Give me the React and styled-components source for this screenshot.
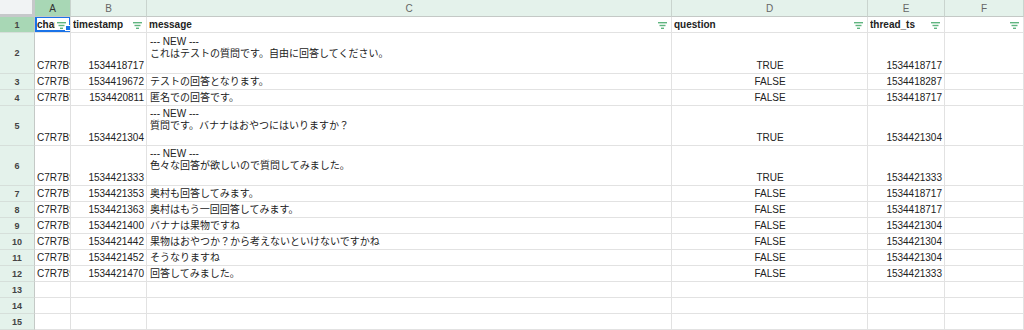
import React from "react";
import styled, { createGlobalStyle } from "styled-components";

const Global = createGlobalStyle`
  html, body { margin: 0; padding: 0; background: #fff; overflow: hidden; }
  body { font-family: "Liberation Sans", Arial, "Noto Sans CJK JP", sans-serif; }
`;

const Sheet = styled.div`
  display: grid;
  grid-template-columns: 35px 36px 76px 525px 196px 77px 79px;
  grid-template-rows: 17px 16px 41px 16px 16px 40px 40px repeat(9, 16px);
  width: 1024px;
  height: 330px;
  overflow: hidden;
  font-size: 10px;
  color: #222;
`;

const Corner = styled.div`
  background: #f1f3f4;
  border-right: 3px solid #c6c8ca;
  border-bottom: 3px solid #c6c8ca;
  box-sizing: border-box;
`;

const ColHead = styled.div`
  box-sizing: border-box;
  background: ${(p) => (p.$selected ? "#a8d7b5" : "#e4f2eb")};
  border-right: 1px solid #c9d4ce;
  border-bottom: 1px solid #c4c9c6;
  display: flex;
  align-items: center;
  justify-content: center;
  font-size: 10px;
  color: ${(p) => (p.$selected ? "#333" : "#666")};
  padding-top: 1px;
`;

const RowHead = styled.div`
  box-sizing: border-box;
  background: ${(p) => (p.$selected ? "#a8d7b5" : "#e4f2eb")};
  border-right: 1px solid #c4c9c6;
  border-bottom: 1px solid #d6dfda;
  display: flex;
  align-items: center;
  justify-content: center;
  font-size: 9px;
  font-weight: bold;
  color: #444;
`;

const Cell = styled.div`
  position: relative;
  box-sizing: border-box;
  border-right: 1px solid ${(p) => (p.$thick ? "#e0e0e0" : "#e2e2e2")};
  border-bottom: 1px solid #e2e2e2;
  display: flex;
  align-items: flex-end;
  justify-content: ${(p) =>
    p.$align === "right" ? "flex-end" : p.$align === "center" ? "center" : "flex-start"};
  padding: 0 ${(p) => (p.$tight ? "0" : "2px")} 1px ${(p) => (p.$tight ? "2px" : "3px")};
  overflow: hidden;
  white-space: nowrap;
  font-weight: ${(p) => (p.$bold ? "bold" : "normal")};
  line-height: 12px;
  background: #fff;
`;

const HeaderCell = styled(Cell)`
  align-items: center;
  justify-content: space-between;
  padding: 1px 4px 0 2px;
  gap: 2px;
`;

const Label = styled.span`
  overflow: hidden;
  white-space: nowrap;
  flex: 1 1 auto;
  min-width: 0;
`;

const Clip = styled.span`
  display: block;
  flex: none;
`;

const Lines = styled.div`
  display: flex;
  flex-direction: column;
`;

const Line = styled.span`
  display: block;
  height: 12px;
`;

const Selection = styled.div`
  position: absolute;
  inset: -1px -1px 0 0;
  border: 2px solid #1a73e8;
  pointer-events: none;
`;

const Handle = styled.div`
  position: absolute;
  right: -2px;
  bottom: -1px;
  width: 6px;
  height: 6px;
  background: #1a73e8;
  border: 1px solid #fff;
  box-sizing: border-box;
`;

const FilterIcon = () => (
  <svg width="9" height="7" viewBox="0 0 9 7" style={{ flex: "none" }}>
    <rect x="0" y="0" width="9" height="1.4" fill="#5fb57f" />
    <rect x="1.5" y="2.8" width="6" height="1.4" fill="#5fb57f" />
    <rect x="3" y="5.6" width="3" height="1.4" fill="#5fb57f" />
  </svg>
);

const cols = ["A", "B", "C", "D", "E", "F"];
const headers = ["channel", "timestamp", "message", "question", "thread_ts", ""];

const rows = [
  ["1534418717", ["--- NEW ---", "これはテストの質問です。自由に回答してください。", ""], "TRUE", "1534418717"],
  ["1534419672", ["テストの回答となります。"], "FALSE", "1534418287"],
  ["1534420811", ["匿名での回答です。"], "FALSE", "1534418717"],
  ["1534421304", ["--- NEW ---", "質問です。バナナはおやつにはいりますか？", ""], "TRUE", "1534421304"],
  ["1534421333", ["--- NEW ---", "色々な回答が欲しいので質問してみました。", ""], "TRUE", "1534421333"],
  ["1534421353", ["奥村も回答してみます。"], "FALSE", "1534418717"],
  ["1534421363", ["奥村はもう一回回答してみます。"], "FALSE", "1534418717"],
  ["1534421400", ["バナナは果物ですね"], "FALSE", "1534421304"],
  ["1534421442", ["果物はおやつか？から考えないといけないですかね"], "FALSE", "1534421304"],
  ["1534421452", ["そうなりますね"], "FALSE", "1534421304"],
  ["1534421470", ["回答してみました。"], "FALSE", "1534421333"],
];

export default function App() {
  return (
    <>
      <Global />
      <Sheet>
        <Corner />
        {cols.map((c) => (
          <ColHead key={c} $selected={c === "A"}>
            {c}
          </ColHead>
        ))}

        <RowHead $selected>1</RowHead>
        {headers.map((h, i) => (
          <HeaderCell key={i} $bold $thick={i === 0}>
            <Label>{h}</Label>
            <FilterIcon />
            {i === 0 && (
              <Selection>
                <Handle />
              </Selection>
            )}
          </HeaderCell>
        ))}

        {rows.map((r, idx) => (
          <React.Fragment key={idx}>
            <RowHead>{idx + 2}</RowHead>
            <Cell $thick $tight>
              <Clip>C7R7B9LJX</Clip>
            </Cell>
            <Cell $align="right">{r[0]}</Cell>
            <Cell>
              <Lines>
                {r[1].map((l, j) => (
                  <Line key={j}>{l}</Line>
                ))}
              </Lines>
            </Cell>
            <Cell $align="center">{r[2]}</Cell>
            <Cell $align="right">{r[3]}</Cell>
            <Cell />
          </React.Fragment>
        ))}

        {[13, 14, 15].map((n) => (
          <React.Fragment key={n}>
            <RowHead>{n}</RowHead>
            <Cell $thick />
            <Cell />
            <Cell />
            <Cell />
            <Cell />
            <Cell />
          </React.Fragment>
        ))}
      </Sheet>
    </>
  );
}
